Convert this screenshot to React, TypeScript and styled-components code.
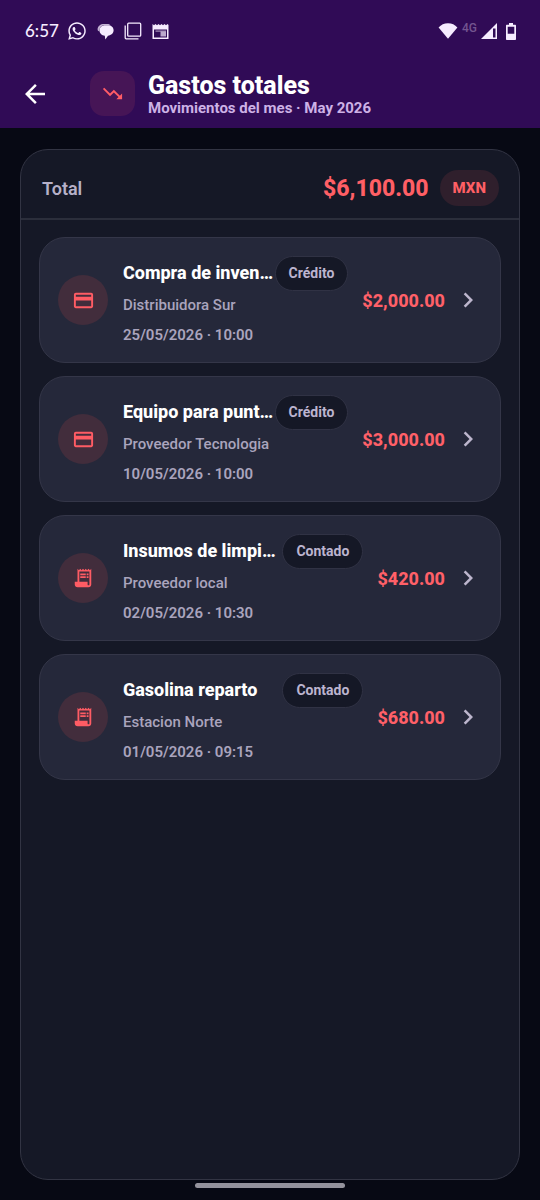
import React from "react";
import styled, { createGlobalStyle } from "styled-components";
import {
  MdArrowBack,
  MdChevronRight,
  MdOutlineCreditCard,
  MdReceiptLong,
  MdTrendingDown,
} from "react-icons/md";
import { FaWhatsapp } from "react-icons/fa";

const GlobalStyle = createGlobalStyle`
  *, *::before, *::after { box-sizing: border-box; }
  body {
    margin: 0;
    background: #070914;
    color: #ffffff;
    font-family: Roboto, "Liberation Sans", sans-serif;
  }
  button { font: inherit; color: inherit; border: 0; padding: 0; cursor: pointer; }
  h1, p, ul { margin: 0; padding: 0; }
`;

const Screen = styled.div`
  display: flex;
  flex-direction: column;
  min-height: 100vh;
`;

const Header = styled.header`
  background: #300b56;
  padding-bottom: 10px;
`;

const StatusBar = styled.div`
  display: flex;
  align-items: center;
  justify-content: space-between;
  height: 62px;
  padding: 0 24px 0 25px;
`;

const StatusGroup = styled.div<{ $gap: number }>`
  display: flex;
  align-items: center;
  gap: ${(p) => p.$gap}px;
  color: #f6ecff;
`;

const Clock = styled.span`
  font: 500 17px/20px Lato, Roboto, sans-serif;
`;

const Network = styled.span`
  font-size: 12px;
  font-weight: 500;
  line-height: 12px;
  padding-bottom: 6px;
  color: #73558f;
`;

const TitleBar = styled.div`
  display: flex;
  align-items: center;
  min-height: 56px;
  padding: 7px 20px 0 20px;
`;

const BackButton = styled.button`
  display: flex;
  margin-right: 40px;
  background: none;
`;

const TitleIcon = styled.div`
  display: flex;
  align-items: center;
  justify-content: center;
  width: 45px;
  height: 45px;
  margin-right: 13px;
  border-radius: 14px;
  background: #461556;
  color: #ff5c66;
`;

const Titles = styled.div`
  padding-top: 2px;
`;

const PageTitle = styled.h1`
  font-size: 25px;
  font-weight: 800;
  line-height: 28px;
`;

const PageSubtitle = styled.p`
  font-size: 15px;
  font-weight: 700;
  line-height: 17px;
  color: #cdb2e6;
`;

const Panel = styled.main`
  flex: 1;
  margin: 21px 20px 0;
  border: 1px solid #323443;
  border-radius: 28px;
  background: #151826;
`;

const TotalRow = styled.div`
  display: flex;
  align-items: center;
  height: 70px;
  padding: 8px 20px 0 21px;
  border-bottom: 2px solid #2b2e3b;
`;

const TotalLabel = styled.span`
  flex: 1;
  font-size: 18px;
  font-weight: 600;
  color: #b6b0c8;
`;

const TotalAmount = styled.span`
  font-size: 23px;
  font-weight: 800;
  color: #ff5f65;
`;

const Currency = styled.span`
  margin-left: 11px;
  padding: 0 13px;
  border-radius: 18px;
  background: #2f1f2c;
  font-size: 15px;
  font-weight: 800;
  line-height: 36px;
  color: #ff5f65;
`;

const List = styled.ul`
  display: flex;
  flex-direction: column;
  gap: 13px;
  padding: 17px 18px;
  list-style: none;
`;

const Row = styled.button`
  display: flex;
  align-items: center;
  width: 100%;
  height: 126px;
  padding: 0 17px 0 18px;
  border: 1px solid #343648;
  border-radius: 26px;
  background: #25283a;
  text-align: left;
`;

const RowIcon = styled.span`
  display: flex;
  flex: none;
  align-items: center;
  justify-content: center;
  width: 50px;
  height: 50px;
  margin-right: 15px;
  border-radius: 50%;
  background: #422d3c;
  color: #ff5c64;
`;

const Details = styled.span`
  flex: 1;
  min-width: 0;
  padding-top: 1px;
`;

const Heading = styled.span`
  display: flex;
  align-items: center;
  margin-bottom: 3px;
`;

const Name = styled.span`
  flex: 1;
  min-width: 0;
  white-space: nowrap;
  font-size: 18px;
  font-weight: 800;
  line-height: 24px;
`;

const Badge = styled.span`
  padding: 0 13px;
  border: 1px solid #303244;
  border-radius: 18px;
  background: #151826;
  font-size: 14px;
  font-weight: 700;
  line-height: 33px;
  color: #bcb4cf;
`;

const Meta = styled.span<{ $strong?: boolean }>`
  display: block;
  font-size: 15px;
  font-weight: ${(p) => (p.$strong ? 600 : 500)};
  line-height: 22px;
  color: #aaa4bd;

  & + & { margin-top: 8px; }
`;

const Amount = styled.span`
  margin: 0 8px 0 14px;
  font-size: 18px;
  font-weight: 800;
  color: #ff6068;
`;

const HomeArea = styled.footer`
  display: flex;
  justify-content: center;
  height: 20px;
  padding-top: 3px;
`;

const HomeBar = styled.div`
  width: 150px;
  height: 5px;
  border-radius: 3px;
  background: #94939d;
`;

type Movement = {
  name: string;
  vendor: string;
  date: string;
  amount: string;
  kind: "Crédito" | "Contado";
};

const movements: Movement[] = [
  { name: "Compra de inven…", vendor: "Distribuidora Sur", date: "25/05/2026 · 10:00", amount: "$2,000.00", kind: "Crédito" },
  { name: "Equipo para punt…", vendor: "Proveedor Tecnologia", date: "10/05/2026 · 10:00", amount: "$3,000.00", kind: "Crédito" },
  { name: "Insumos de limpi…", vendor: "Proveedor local", date: "02/05/2026 · 10:30", amount: "$420.00", kind: "Contado" },
  { name: "Gasolina reparto", vendor: "Estacion Norte", date: "01/05/2026 · 09:15", amount: "$680.00", kind: "Contado" },
];

const ChatIcon = () => (
  <svg width="17" height="17" viewBox="0 0 17 17" fill="currentColor" aria-hidden="true">
    <path d="M.6 6.500C.6 3 3.500 1 7 1h3.500c1.200 0 2 .4 2.600 1H8C4.500 2 2.300 4.500 2.300 8.500 1.200 8 .6 7.500.6 6.500z" opacity=".75" />
    <path d="M8 2.300h3c3.200 0 5.600 2 5.600 5 0 3-2.400 5.100-5.600 5.400L8.300 16.400l-.5-3.700C4.800 12.400 2.500 10.300 2.500 7.500c0-3 2.500-5.200 5.500-5.200z" />
  </svg>
);

const StackIcon = () => (
  <svg width="18" height="18" viewBox="0 0 18 18" fill="none" stroke="currentColor" aria-hidden="true">
    <rect x="3.700" y="1.200" width="13" height="13" rx="1" strokeWidth="1.300" />
    <path d="M1.200 3.500v12.300c0 .6.4 1 1 1h12.300" strokeWidth="1.300" />
  </svg>
);

const NewsIcon = () => (
  <svg width="17" height="17" viewBox="0 0 17 17" fill="currentColor" aria-hidden="true">
    <path fillRule="evenodd" d="M.5 1l1.500 1.300L3.500 1 5 2.300 6.500 1 8 2.300 9.500 1 11 2.300 12.500 1 14 2.300 15.500 1l1 1v14H.5zM2 6.500v8h13v-8z" />
    <path d="M3.500 7.500H14v1.200H3.500z" opacity=".6" />
    <path d="M8.500 8.500H14v5H8.500z" opacity=".7" />
  </svg>
);

const WifiIcon = () => (
  <svg width="20" height="16" viewBox="0 0 20 16" fill="currentColor" aria-hidden="true">
    <path d="M10 15.800L.6 4.500C3 1.800 6.200.3 10 .3s7 1.500 9.400 4.200z" />
  </svg>
);

const SignalIcon = () => (
  <svg width="16" height="16" viewBox="0 0 16 16" fill="currentColor" aria-hidden="true">
    <path fillRule="evenodd" d="M16 0v16H0zM12 5.500v9h2.500v-9z" />
  </svg>
);

const BatteryIcon = () => (
  <svg width="10" height="17" viewBox="0 0 10 17" fill="currentColor" aria-hidden="true">
    <path fillRule="evenodd" d="M3 0h4v1.800h2c.6 0 1 .4 1 1V16c0 .6-.4 1-1 1H1c-.6 0-1-.4-1-1V2.800c0-.6.4-1 1-1h2zM1.700 3.700v7h6.600v-7z" />
  </svg>
);

export default function App() {
  return (
    <>
      <GlobalStyle />
      <Screen>
        <Header>
          <StatusBar>
            <StatusGroup $gap={10}>
              <StatusGroup $gap={8}>
                <Clock>6:57</Clock>
                <FaWhatsapp size={20} />
              </StatusGroup>
              <ChatIcon />
              <StackIcon />
              <NewsIcon />
            </StatusGroup>
            <StatusGroup $gap={9}>
              <StatusGroup $gap={4}>
                <WifiIcon />
                <Network>4G</Network>
                <SignalIcon />
              </StatusGroup>
              <BatteryIcon />
            </StatusGroup>
          </StatusBar>
          <TitleBar>
            <BackButton aria-label="Volver">
              <MdArrowBack size={30} />
            </BackButton>
            <TitleIcon>
              <MdTrendingDown size={23} />
            </TitleIcon>
            <Titles>
              <PageTitle>Gastos totales</PageTitle>
              <PageSubtitle>Movimientos del mes · May 2026</PageSubtitle>
            </Titles>
          </TitleBar>
        </Header>
        <Panel>
          <TotalRow>
            <TotalLabel>Total</TotalLabel>
            <TotalAmount>$6,100.00</TotalAmount>
            <Currency>MXN</Currency>
          </TotalRow>
          <List>
            {movements.map((m) => (
              <li key={m.name}>
                <Row>
                  <RowIcon>
                    {m.kind === "Crédito" ? <MdOutlineCreditCard size={23} /> : <MdReceiptLong size={22} />}
                  </RowIcon>
                  <Details>
                    <Heading>
                      <Name>{m.name}</Name>
                      <Badge>{m.kind}</Badge>
                    </Heading>
                    <Meta>{m.vendor}</Meta>
                    <Meta $strong>{m.date}</Meta>
                  </Details>
                  <Amount>{m.amount}</Amount>
                  <MdChevronRight size={30} color="#bdb6cd" />
                </Row>
              </li>
            ))}
          </List>
        </Panel>
        <HomeArea>
          <HomeBar />
        </HomeArea>
      </Screen>
    </>
  );
}
